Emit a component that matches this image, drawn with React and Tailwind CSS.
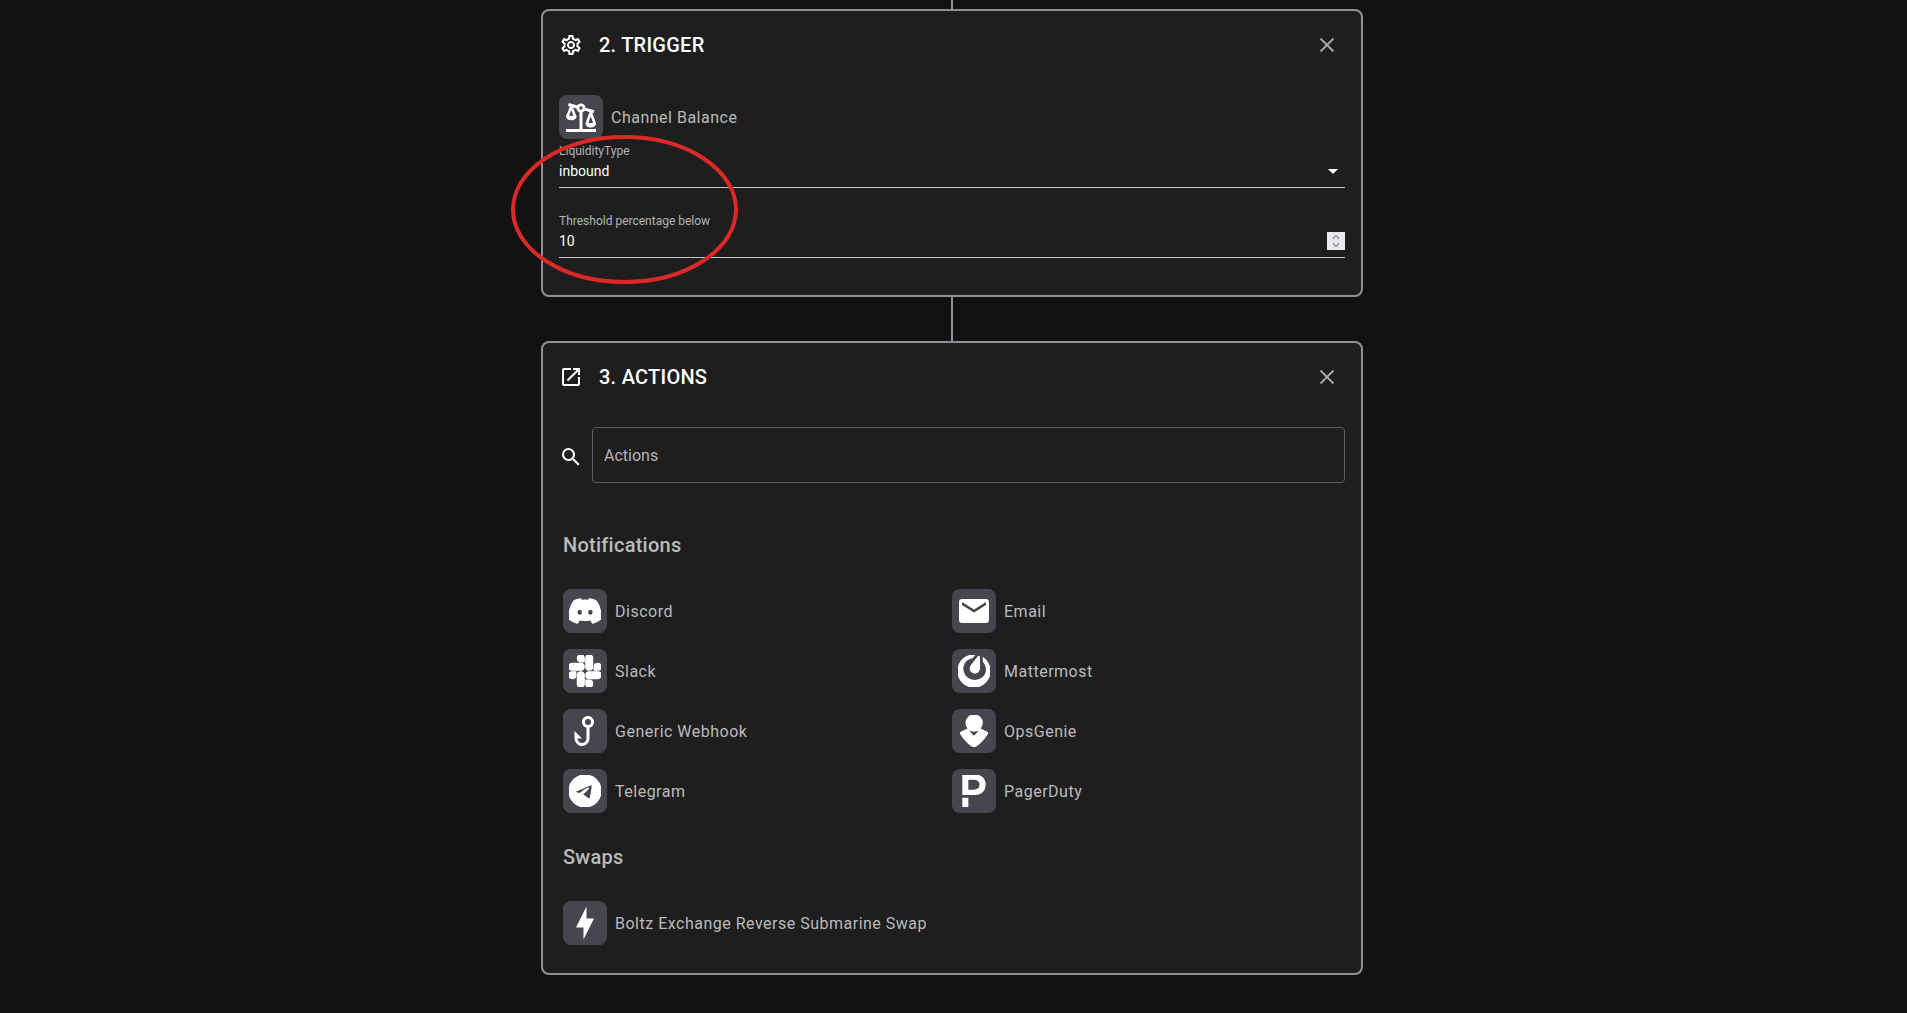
import React from "react";
import { MdOutlineSettings, MdOpenInNew, MdSearch, MdArrowDropDown } from "react-icons/md";
import { SiDiscord, SiMattermost, SiOpsgenie, SiPagerduty, SiTelegram } from "react-icons/si";

function Glyph({ d, className = "size-9" }) {
  return (
    <svg viewBox="0 0 24 24" className={className} fill="currentColor" fillRule="evenodd">
      <path d={d} />
    </svg>
  );
}

const SLACK =
  "M5.042 15.165a2.528 2.528 0 0 1-2.52 2.523A2.528 2.528 0 0 1 0 15.165a2.527 2.527 0 0 1 2.522-2.52h2.52v2.52zM6.313 15.165a2.527 2.527 0 0 1 2.521-2.52 2.527 2.527 0 0 1 2.521 2.52v6.313A2.528 2.528 0 0 1 8.834 24a2.528 2.528 0 0 1-2.521-2.522v-6.313zM8.834 5.042a2.528 2.528 0 0 1-2.521-2.52A2.528 2.528 0 0 1 8.834 0a2.528 2.528 0 0 1 2.521 2.522v2.52H8.834zM8.834 6.313a2.528 2.528 0 0 1 2.521 2.521 2.528 2.528 0 0 1-2.521 2.521H2.522A2.528 2.528 0 0 1 0 8.834a2.528 2.528 0 0 1 2.522-2.521h6.312zM18.956 8.834a2.528 2.528 0 0 1 2.522-2.521A2.528 2.528 0 0 1 24 8.834a2.528 2.528 0 0 1-2.522 2.521h-2.522V8.834zM17.688 8.834a2.528 2.528 0 0 1-2.523 2.521 2.527 2.527 0 0 1-2.52-2.521V2.522A2.527 2.527 0 0 1 15.165 0a2.528 2.528 0 0 1 2.523 2.522v6.312zM15.165 18.956a2.528 2.528 0 0 1 2.523 2.522A2.528 2.528 0 0 1 15.165 24a2.527 2.527 0 0 1-2.52-2.522v-2.522h2.52zM15.165 17.688a2.527 2.527 0 0 1-2.52-2.523 2.526 2.526 0 0 1 2.52-2.52h6.313A2.527 2.527 0 0 1 24 15.165a2.528 2.528 0 0 1-2.522 2.523h-6.313z";
const HOOK =
  "M18 6C18 7.82 16.76 9.41 15 9.86V17A5 5 0 0 1 5 17V12L10 17H7A3 3 0 0 0 13 17V9.86C11.23 9.4 10 7.8 10 5.97C10 3.76 11.8 2 14 2C16.22 2 18 3.79 18 6M14 8A2 2 0 0 0 16 6A2 2 0 0 0 14 4A2 2 0 0 0 12 6A2 2 0 0 0 14 8Z";
const MAIL =
  "M20 8L12 13L4 8V6L12 11L20 6M20 4H4C2.89 4 2 4.89 2 6V18A2 2 0 0 0 4 20H20A2 2 0 0 0 22 18V6C22 4.89 21.1 4 20 4Z";
const BOLT = "M11 15H6L13 1V9H18L11 23V15Z";

function ScalesIcon() {
  return (
    <svg viewBox="0 0 24 24" className="size-9" fill="none" stroke="currentColor">
      <path d="M2 21H22M12 8V21" strokeWidth="2" />
      <path d="M3.6 3.7L10 5.5M14 6.6L20.6 8.5" strokeWidth="2" />
      <circle cx="12" cy="6" r="2.05" strokeWidth="1.9" />
      <path d="M5.5 5L2.8 12M5.5 5L8.2 12M18.5 9L15.8 16.5M18.5 9L21.2 16.5" strokeWidth="1.7" />
      <path
        d="M2 11.2H9.1C9.1 13.2 7.6 14.2 5.5 14.2S2 13.2 2 11.2ZM15 16H22C22 18 20.5 19 18.5 19S15 18 15 16Z"
        fill="currentColor"
        stroke="none"
      />
    </svg>
  );
}

function CloseIcon() {
  return (
    <svg viewBox="0 0 24 24" className="size-6 text-[#a9a9a9]" fill="none" stroke="currentColor">
      <path d="M5.5 5.5L18.5 18.5M18.5 5.5L5.5 18.5" strokeWidth="1.8" />
    </svg>
  );
}

function Tile({ icon, label }) {
  return (
    <div className="flex h-11 items-center gap-2">
      <div className="flex size-11 shrink-0 items-center justify-center rounded-lg bg-[#49454f] text-white">{icon}</div>
      <span className="pt-0.5 text-base leading-6 tracking-[0.5px] text-[#bbbbbb]">{label}</span>
    </div>
  );
}

function Connector({ className }) {
  return <div className={"ml-[410px] w-0.5 bg-[#938f99] " + className} />;
}

function CardHeader({ icon, title }) {
  return (
    <div className="flex h-6 items-center pr-[6px]">
      {icon}
      <h2 className="ml-4 flex-1 text-xl leading-6 font-medium tracking-[0.25px]">{title}</h2>
      <CloseIcon />
    </div>
  );
}

function Field({ label, value, children }) {
  return (
    <div className="flex h-[49px] items-start border-b border-[#c6c6c6] pt-1">
      <div className="flex-1">
        <div className="text-xs leading-4 text-[#b4b4b4]">{label}</div>
        <div className="text-sm leading-6">{value}</div>
      </div>
      {children}
    </div>
  );
}

function Spinner() {
  return (
    <div className="mt-[19px] flex size-[18px] items-center justify-center bg-[#e9e7ee] text-[#8f8d9c]">
      <svg viewBox="0 0 18 18" className="size-[18px]" fill="none" stroke="currentColor" strokeWidth="1.4">
        <path d="M5.8 6.7L9 3.8L12.2 6.7M5.8 11.3L9 14.2L12.2 11.3" />
      </svg>
    </div>
  );
}

const notifications = [
  ["Discord", <SiDiscord className="size-8 stroke-1" />],
  ["Email", <Glyph d={MAIL} />],
  ["Slack", <Glyph d={SLACK} className="size-8 stroke-current stroke-1" />],
  ["Mattermost", <SiMattermost className="size-8 stroke-1" />],
  ["Generic Webhook", <Glyph d={HOOK} />],
  ["OpsGenie", <SiOpsgenie className="size-8 stroke-1" />],
  ["Telegram", <SiTelegram className="size-8 stroke-1" />],
  ["PagerDuty", <SiPagerduty className="size-8 stroke-1" />],
];

export default function App() {
  return (
    <div className="relative h-[1013px] w-full overflow-hidden bg-[#121212] pl-[541px] font-['Roboto',sans-serif] text-white">
      <div className="w-[822px]">
        <Connector className="h-[9px]" />
        <section className="h-72 rounded-lg border-2 border-[#938f99] bg-[#1e1e1e] px-4 pt-[22px]">
          <CardHeader icon={<MdOutlineSettings className="size-6" />} title="2. TRIGGER" />
          <div className="mt-[38px]">
            <Tile icon={<ScalesIcon />} label="Channel Balance" />
          </div>
          <Field label="LiquidityType" value="inbound">
            <MdArrowDropDown className="mt-4 size-6" />
          </Field>
          <div className="mt-[21px]">
            <Field label="Threshold percentage below" value="10">
              <Spinner />
            </Field>
          </div>
        </section>
        <Connector className="h-11" />
        <section className="h-[634px] rounded-lg border-2 border-[#938f99] bg-[#1e1e1e] px-4 pt-[22px]">
          <CardHeader icon={<MdOpenInNew className="size-6" />} title="3. ACTIONS" />
          <div className="mt-[38px] flex items-center gap-[9px]">
            <MdSearch className="mt-1 size-6" />
            <div className="flex h-14 flex-1 items-center rounded border border-[#5b5b5b] px-[11px] pt-0.5 text-base text-[#b4b4b4]">
              Actions
            </div>
          </div>
          <div className="px-1">
            <h3 className="mt-[50px] text-xl leading-6 font-medium tracking-[0.25px] text-[#bbbbbb]">Notifications</h3>
            <div className="mt-8 grid grid-cols-2 gap-y-4">
              {notifications.map(([label, icon]) => (
                <Tile key={label} label={label} icon={icon} />
              ))}
            </div>
            <h3 className="mt-8 text-xl leading-6 font-medium tracking-[0.25px] text-[#bbbbbb]">Swaps</h3>
            <div className="mt-8">
              <Tile label="Boltz Exchange Reverse Submarine Swap" icon={<Glyph d={BOLT} />} />
            </div>
          </div>
        </section>
      </div>
      <svg viewBox="0 0 230 152" className="pointer-events-none absolute top-[134px] left-[510px] h-[152px] w-[230px]">
        <ellipse cx="114.5" cy="75.5" rx="111.5" ry="72.5" fill="none" stroke="#dd2828" strokeWidth="4" />
      </svg>
    </div>
  );
}
